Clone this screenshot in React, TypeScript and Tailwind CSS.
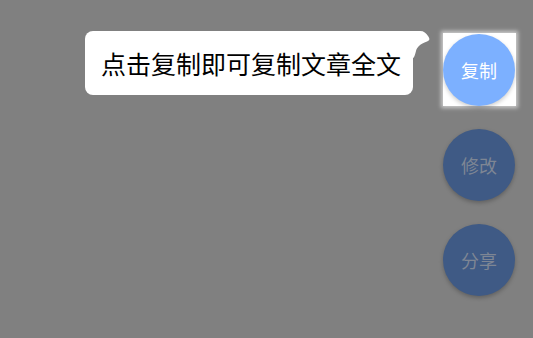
const cjk = { fontFamily: '"Noto Sans CJK SC", "Noto Sans", sans-serif' };

function Fab({ label, dim }: { label: string; dim?: boolean }) {
  return (
    <div
      className={
        dim
          ? "w-[72px] h-[72px] rounded-full bg-[#3f5a85] text-[#7e8694] flex items-center justify-center text-[18px] shadow-[0_2px_4px_rgba(0,0,0,0.25)]"
          : "w-[72px] h-[72px] rounded-full bg-[#7cb0ff] text-white flex items-center justify-center text-[18px] shadow-[0_2px_4px_rgba(0,0,0,0.2)]"
      }
      style={cjk}
    >
      {label}
    </div>
  );
}

export default function App() {
  return (
    <div className="relative w-[533px] h-[338px] bg-[#808080] overflow-hidden flex justify-end pr-[18px] pt-[34px]" style={cjk}>
      <div className="flex flex-col gap-[23px]">
        <div className="bg-white shadow-[0_0_4px_2px_rgba(255,255,255,0.6)] -mt-px -mr-px pt-px pr-px">
          <Fab label="复制" />
        </div>
        <Fab label="修改" dim />
        <Fab label="分享" dim />
      </div>

      {/* tooltip bubble */}
      <div className="absolute left-[85px] top-[31px] w-[328px] h-[64px] bg-white rounded-[8px] rounded-tr-none flex items-center pl-[16px]">
        <span className="text-[25px] text-black leading-none">点击复制即可复制文章全文</span>
        <svg className="absolute left-[327px] top-0" width="19" height="28" viewBox="0 0 19 28">
          <path
            d="M0 0 H8 C12 0 14 2 16 5 C18 8 18 9 15 10.5 C8 13 5 16 4 20 C3 24 2 27 1 27 H0 Z"
            fill="white"
          />
        </svg>
      </div>
    </div>
  );
}
